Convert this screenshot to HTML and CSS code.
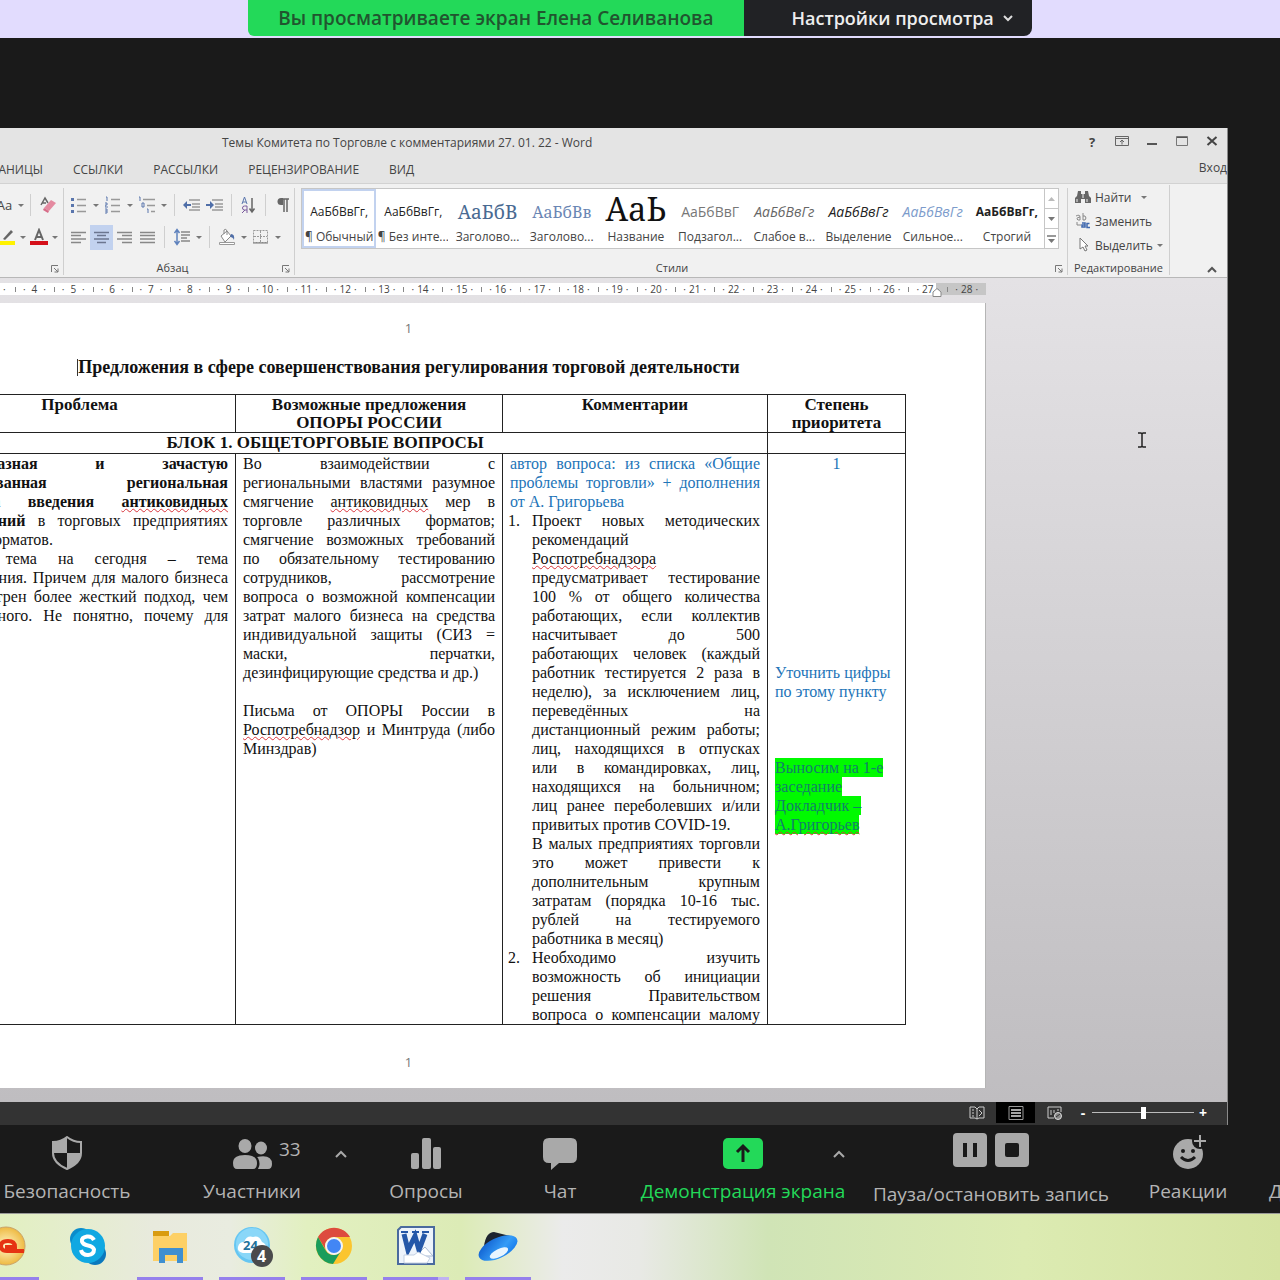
FILE: index.html
```html
<!DOCTYPE html>
<html lang="ru">
<head>
    <meta charset="UTF-8">
    <meta name="viewport" content="width=device-width, initial-scale=1.0">
    <title>Темы Комитета по Торговле - Word</title>
    <link rel="stylesheet" href="styles.css">
</head>
<body>
    <header class="share-strip">
        <div class="share-status">Вы просматриваете экран Елена Селиванова</div>
        <button class="share-options">Настройки просмотра
            <svg width="12" height="8" viewBox="0 0 12 8"><path d="M2 2l4 4 4-4" fill="none" stroke="#ddd" stroke-width="2"/></svg>
        </button>
    </header>

    <main class="stage">
        <div class="word">
            <div class="titlebar">
                <div class="title">Темы Комитета по Торговле с комментариями 27. 01. 22 - Word</div>
                <div class="window-buttons">
                    <button aria-label="Справка">?</button>
                    <button aria-label="Параметры ленты"><svg width="14" height="12" viewBox="0 0 14 12"><path d="M.5 1.500h13v9H.5zM.5 3.500h13M7 9.500V5M5 7l2-2 2 2" fill="none" stroke="#666"/></svg></button>
                    <button aria-label="Свернуть"><svg width="12" height="12" viewBox="0 0 12 12"><path d="M1 9h10" stroke="#555" stroke-width="2"/></svg></button>
                    <button aria-label="Развернуть"><svg width="12" height="12" viewBox="0 0 12 12"><path d="M1 2h10" stroke="#555" stroke-width="2"/><path d="M.5 1.500h11v9H.5z" fill="none" stroke="#777"/></svg></button>
                    <button aria-label="Закрыть"><svg width="12" height="12" viewBox="0 0 12 12"><path d="M1.500 2l9 8M10.500 2l-9 8" stroke="#444" stroke-width="2"/></svg></button>
                </div>
            </div>

            <nav class="tabs">
                <a href="#" class="tab tab-cut">РАЗМЕТКА СТРАНИЦЫ</a>
                <a href="#" class="tab">ССЫЛКИ</a>
                <a href="#" class="tab">РАССЫЛКИ</a>
                <a href="#" class="tab">РЕЦЕНЗИРОВАНИЕ</a>
                <a href="#" class="tab">ВИД</a>
                <a href="#" class="signin">Вход</a>
            </nav>

            <div class="ribbon">
                <section class="group group-font">
                    <div class="tools">
                        <button class="tool">Аа</button><button class="drop" aria-label="Регистр"></button>
                        <i class="sep"></i>
                        <button class="tool" aria-label="Очистить формат"><svg width="18" height="18" viewBox="0 0 18 18"><path d="M2 9l4-7 3 5M3 7h4" fill="none" stroke="#666" stroke-width="1.500"/><path d="M5 12l7-8 5 3-7 8z" fill="#e48aa0"/><path d="M5 12l5 3-1 2-5-3z" fill="#d76c88"/></svg></button>
                    </div>
                    <div class="tools">
                        <button class="tool" aria-label="Цвет выделения"><svg width="18" height="18" viewBox="0 0 18 18"><path d="M5 11l8-9 2 2-8 8z" fill="#666"/><path d="M0 13h17v4H0z" fill="#fff200"/></svg></button><button class="drop" aria-label="Цвета выделения"></button>
                        <button class="tool" aria-label="Цвет текста"><svg width="18" height="18" viewBox="0 0 18 18"><path d="M5 12l4-10 4 10M6 9h6" fill="none" stroke="#666" stroke-width="2"/><path d="M0 13h18v4H0z" fill="#d5101a"/></svg></button><button class="drop" aria-label="Цвета текста"></button>
                    </div>
                    <svg class="launcher" width="8" height="8" viewBox="0 0 8 8"><path d="M.5 7V.5H7M3 3l4 4M7 3.500V7H3.500" fill="none" stroke="#777"/></svg>
                </section>

                <section class="group group-para">
                    <div class="tools">
                        <button class="tool" aria-label="Маркеры"><svg width="16" height="18" viewBox="0 0 16 18"><path d="M0 2h3v3H0zM0 8h3v3H0zM0 14h3v3H0z" fill="#5a76ad"/><path d="M6 3.500h9M6 9.500h9M6 15.500h9" stroke="#999" stroke-width="1.500"/></svg></button><button class="drop" aria-label="Виды маркеров"></button>
                        <button class="tool" aria-label="Нумерация"><svg width="16" height="18" viewBox="0 0 16 18"><path d="M1 1h1v4M0 7h2v2H0v2h3M0 13h2v4H0M0 15h2" fill="none" stroke="#5a76ad"/><path d="M6 3.500h9M6 9.500h9M6 15.500h9" stroke="#999" stroke-width="1.500"/></svg></button><button class="drop" aria-label="Виды нумерации"></button>
                        <button class="tool" aria-label="Многоуровневый список"><svg width="18" height="18" viewBox="0 0 18 18"><path d="M1 1h1v4M4 7h2v4H4zM9 13h1v4" fill="none" stroke="#5a76ad"/><path d="M5 3.500h12M9 9.500h8M13 15.500h4" stroke="#999" stroke-width="1.500"/></svg></button><button class="drop" aria-label="Виды списков"></button>
                        <i class="sep"></i>
                        <button class="tool" aria-label="Уменьшить отступ"><svg width="17" height="14" viewBox="0 0 17 14"><path d="M6 2h11M9 6h8M9 9h8M6 12h11" stroke="#999" stroke-width="1.500"/><path d="M0 7l4-4v3h4v2H4v3z" fill="#4f6ea8"/></svg></button>
                        <button class="tool" aria-label="Увеличить отступ"><svg width="17" height="14" viewBox="0 0 17 14"><path d="M6 2h11M9 6h8M9 9h8M6 12h11" stroke="#999" stroke-width="1.500"/><path d="M8 7L4 3v3H0v2h4v3z" fill="#4f6ea8"/></svg></button>
                        <i class="sep"></i>
                        <button class="tool" aria-label="Сортировка"><svg width="15" height="18" viewBox="0 0 15 18"><path d="M1 8l2.500-7L6 8M2 6h3" fill="none" stroke="#5a76ad"/><path d="M6 17v-7H3.500a2 2 0 000 4H6M4 14l-3 3" fill="none" stroke="#7a5a9d"/><path d="M11 2v13M8.500 12.500L11 16l2.500-3.500" fill="none" stroke="#666" stroke-width="1.500"/></svg></button>
                        <i class="sep"></i>
                        <button class="tool" aria-label="Непечатаемые знаки"><svg width="12" height="14" viewBox="0 0 12 14"><path d="M5 1h7M7 1v13M10 1v13" stroke="#666" stroke-width="1.500"/><path d="M6 0H4a3.500 3.500 0 000 7h2z" fill="#666"/></svg></button>
                    </div>
                    <div class="tools">
                        <button class="tool" aria-label="По левому краю"><svg width="15" height="13" viewBox="0 0 15 13"><path d="M0 1.500h15M0 4.500h10M0 8h15M0 11.500h10" stroke="#888" stroke-width="1.500"/></svg></button>
                        <button class="tool tool-on" aria-label="По центру"><svg width="15" height="13" viewBox="0 0 15 13"><path d="M0 1.500h15M3 4.500h9M0 8h15M3 11.500h9" stroke="#6b7690" stroke-width="1.500"/></svg></button>
                        <button class="tool" aria-label="По правому краю"><svg width="15" height="13" viewBox="0 0 15 13"><path d="M0 1.500h15M5 4.500h10M0 8h15M5 11.500h10" stroke="#888" stroke-width="1.500"/></svg></button>
                        <button class="tool" aria-label="По ширине"><svg width="15" height="13" viewBox="0 0 15 13"><path d="M0 1.500h15M0 4.500h15M0 8h15M0 11.500h15" stroke="#888" stroke-width="1.500"/></svg></button>
                        <i class="sep"></i>
                        <button class="tool" aria-label="Интервал"><svg width="16" height="18" viewBox="0 0 16 18"><path d="M3 2v14M.5 5L3 1.500 5.500 5M.5 13L3 16.500 5.500 13" fill="none" stroke="#5f82bd" stroke-width="1.500"/><path d="M7 4h9M7 7h9M7 10h6M7 13h9" stroke="#888" stroke-width="1.500"/></svg></button><button class="drop" aria-label="Виды интервалов"></button>
                        <i class="sep"></i>
                        <button class="tool" aria-label="Заливка"><svg width="18" height="18" viewBox="0 0 18 18"><path d="M3 8l6-5 4 5-6 6zM6 6V2q2-2 3 1v4" fill="#fff" stroke="#888"/><path d="M13 6q4 0 3 6-1-3-4-3z" fill="#4f6ea8"/><path d="M1.500 14.500h15v2h-15z" fill="#fff" stroke="#999"/></svg></button><button class="drop" aria-label="Цвета заливки"></button>
                        <button class="tool" aria-label="Границы"><svg width="15" height="14" viewBox="0 0 15 14"><path d="M.5 .5h14v12H.5zM7.500 1v12M1 6.500h13" fill="none" stroke="#999" stroke-dasharray="2 1"/><path d="M0 13h15" stroke="#777"/></svg></button><button class="drop" aria-label="Виды границ"></button>
                    </div>
                    <div class="group-name">Абзац</div>
                    <svg class="launcher" width="8" height="8" viewBox="0 0 8 8"><path d="M.5 7V.5H7M3 3l4 4M7 3.500V7H3.500" fill="none" stroke="#777"/></svg>
                </section>

                <section class="group group-styles">
                    <div class="gallery">
                        <button class="style style-on"><span class="sample">АаБбВвГг,</span><span>¶ Обычный</span></button>
                        <button class="style"><span class="sample">АаБбВвГг,</span><span>¶ Без инте...</span></button>
                        <button class="style"><span class="sample sample-h1">АаБбВ</span><span>Заголово...</span></button>
                        <button class="style"><span class="sample sample-h2">АаБбВв</span><span>Заголово...</span></button>
                        <button class="style"><span class="sample sample-title">АаЬ</span><span>Название</span></button>
                        <button class="style"><span class="sample sample-sub">АаБбВвГ</span><span>Подзагол...</span></button>
                        <button class="style"><span class="sample sample-weak">АаБбВвГг</span><span>Слабое в...</span></button>
                        <button class="style"><span class="sample sample-em">АаБбВвГг</span><span>Выделение</span></button>
                        <button class="style"><span class="sample sample-strong-em">АаБбВвГг</span><span>Сильное...</span></button>
                        <button class="style"><span class="sample sample-bold">АаБбВвГг,</span><span>Строгий</span></button>
                        <div class="gallery-scroll">
                            <button aria-label="Вверх"><svg width="7" height="4" viewBox="0 0 7 4"><path d="M0 4l3.500-4L7 4z" fill="#bbb"/></svg></button>
                            <button aria-label="Вниз"><svg width="7" height="4" viewBox="0 0 7 4"><path d="M0 0l3.500 4L7 0z" fill="#777"/></svg></button>
                            <button aria-label="Все стили"><svg width="9" height="8" viewBox="0 0 9 8"><path d="M0 1h9" stroke="#777" stroke-width="1.500"/><path d="M1 4l3.500 4L8 4z" fill="#777"/></svg></button>
                        </div>
                    </div>
                    <div class="group-name">Стили</div>
                    <svg class="launcher" width="8" height="8" viewBox="0 0 8 8"><path d="M.5 7V.5H7M3 3l4 4M7 3.500V7H3.500" fill="none" stroke="#777"/></svg>
                </section>

                <section class="group group-edit">
                    <button class="edit"><svg width="16" height="14" viewBox="0 0 16 14"><path d="M3 1h3v3h4V1h3l1 5 2 2v5h-6V9H6v4H0V8l2-2z" fill="#666"/><path d="M2 9v3M12 9v3M8 1v7" stroke="#f1f1f1"/></svg>Найти<i class="drop drop-far"></i></button>
                    <button class="edit"><svg width="16" height="16" viewBox="0 0 16 16"><path d="M1 3q4-2 4 1v3H3q-3-2 2-3M8 0v7h2q2-2 0-4H8" fill="none" stroke="#888"/><path d="M2 9v3h4" fill="none" stroke="#888"/><path d="M7 10h3v4H7v-2h3M14.500 10.500h-2.500v4h3" fill="none" stroke="#3f68ae" stroke-width="1.500"/></svg>Заменить</button>
                    <button class="edit"><svg width="16" height="16" viewBox="0 0 16 16"><path d="M5 1v11l3-2 2 4 2-1-2-4h3z" fill="#fff" stroke="#777"/></svg>Выделить<i class="drop"></i></button>
                    <div class="group-name">Редактирование</div>
                </section>
                <button class="collapse" aria-label="Свернуть ленту"><svg width="10" height="7" viewBox="0 0 10 7"><path d="M1 6l4-4 4 4" fill="none" stroke="#555" stroke-width="2"/></svg></button>
            </div>

            <div class="workspace">
                <div class="ruler">
                    <span>4</span><span>5</span><span>6</span><span>7</span><span>8</span><span>9</span><span>10</span><span>11</span><span>12</span><span>13</span><span>14</span><span>15</span><span>16</span><span>17</span><span>18</span><span>19</span><span>20</span><span>21</span><span>22</span><span>23</span><span>24</span><span>25</span><span>26</span><span>27</span><span>28</span>
                    <svg class="indent-mark" width="10" height="9" viewBox="0 0 10 9"><path d="M1 8.500V4l4-3.500L9 4v4.500z" fill="#fff" stroke="#888"/></svg>
                </div>

                <article class="page">
                    <div class="page-number">1</div>
                    <h1>Предложения в сфере совершенствования регулирования торговой деятельности</h1>
                    <table>
                        <colgroup>
                            <col class="col-num"><col class="col-problem"><col class="col-offer"><col class="col-comment"><col class="col-rank">
                        </colgroup>
                        <thead>
                            <tr>
                                <th></th>
                                <th>Проблема</th>
                                <th>Возможные предложения<br>ОПОРЫ РОССИИ</th>
                                <th>Комментарии</th>
                                <th>Степень<br>приоритета</th>
                            </tr>
                        </thead>
                        <tbody>
                            <tr class="block-row">
                                <td colspan="4">БЛОК 1. ОБЩЕТОРГОВЫЕ ВОПРОСЫ</td>
                                <td></td>
                            </tr>
                            <tr>
                                <td></td>
                                <td>
                                    <p>
                                        <b>Разнообразная и зачастую<br>
                                        необоснованная региональная<br>
                                        практика введения <u class="typo">антиковидных</u><br>
                                        ограничений</b> в торговых предприятиях
                                        <span class="tail">разных форматов.</span>
                                    </p>
                                    <p>
                                        Главная тема на сегодня – тема<br>
                                        тестирования. Причем для малого бизнеса<br>
                                        предусмотрен более жесткий подход, чем<br>
                                        для крупного. Не понятно, почему для
                                    </p>
                                </td>
                                <td>
                                    <p>
                                        Во взаимодействии с<br>
                                        региональными властями разумное<br>
                                        смягчение <u class="typo">антиковидных</u> мер в<br>
                                        торговле различных форматов;<br>
                                        смягчение возможных требований<br>
                                        по обязательному тестированию<br>
                                        сотрудников, рассмотрение<br>
                                        вопроса о возможной компенсации<br>
                                        затрат малого бизнеса на средства<br>
                                        индивидуальной защиты (СИЗ =<br>
                                        маски, перчатки,
                                        <span class="tail">дезинфицирующие средства и др.)</span>
                                    </p>
                                    <p class="after-line">
                                        Письма от ОПОРЫ России в<br>
                                        <u class="typo">Роспотребнадзор</u> и Минтруда (либо
                                        <span class="tail">Минздрав)</span>
                                    </p>
                                </td>
                                <td>
                                    <p class="blue">
                                        автор вопроса: из списка «Общие<br>
                                        проблемы торговли» + дополнения
                                        <span class="tail">от А. Григорьева</span>
                                    </p>
                                    <ol>
                                        <li>
                                            <p>
                                                Проект новых методических
                                                <span class="tail">рекомендаций</span>
                                                <span class="tail"><u class="typo">Роспотребнадзора</u></span>
                                                предусматривает тестирование<br>
                                                100 % от общего количества<br>
                                                работающих, если коллектив<br>
                                                насчитывает до 500<br>
                                                работающих человек (каждый<br>
                                                работник тестируется 2 раза в<br>
                                                неделю), за исключением лиц,<br>
                                                переведённых на<br>
                                                дистанционный режим работы;<br>
                                                лиц, находящихся в отпусках<br>
                                                или в командировках, лиц,<br>
                                                находящихся на больничном;<br>
                                                лиц ранее переболевших и/или
                                                <span class="tail">привитых против COVID-19.</span>
                                            </p>
                                            <p>
                                                В малых предприятиях торговли<br>
                                                это может привести к<br>
                                                дополнительным крупным<br>
                                                затратам (порядка 10-16 тыс.<br>
                                                рублей на тестируемого
                                                <span class="tail">работника в месяц)</span>
                                            </p>
                                        </li>
                                        <li>
                                            <p>
                                                Необходимо изучить<br>
                                                возможность об инициации<br>
                                                решения Правительством<br>
                                                вопроса о компенсации малому
                                            </p>
                                        </li>
                                    </ol>
                                </td>
                                <td class="rank">
                                    <p class="blue rank-value">1</p>
                                    <p class="blue rank-note">Уточнить цифры по этому пункту</p>
                                    <p class="blue rank-plan"><mark>Выносим на 1-е<br>заседание<br>Докладчик –<br><u class="typo">А.Григорьев</u></mark></p>
                                </td>
                            </tr>
                        </tbody>
                    </table>
                    <div class="page-number page-foot">1</div>
                </article>

                <svg class="ibeam" width="10" height="16" viewBox="0 0 10 16"><path d="M1 1h3l1 1 1-1h3M1 15h3l1-1 1 1h3M5 2v12" fill="none" stroke="#222" stroke-width="1.500"/></svg>
            </div>

            <footer class="statusbar">
                <button class="view" aria-label="Режим чтения"><svg width="16" height="14" viewBox="0 0 16 14"><path d="M1 1h5l2 2 2-2h5v11h-5l-2 1-2-1H1zM8 3v10M3 4h2M3 7h2M3 10h2M10 4l3 3-3 3" fill="none" stroke="#ccc"/></svg></button>
                <button class="view view-on" aria-label="Разметка страницы"><svg width="16" height="14" viewBox="0 0 16 14"><path d="M1 .5h14v13H1z" fill="none" stroke="#999"/><path d="M3 4h10M3 7h10M3 10h10" stroke="#ddd" stroke-width="1.500"/></svg></button>
                <button class="view" aria-label="Веб-документ"><svg width="16" height="14" viewBox="0 0 16 14"><path d="M7 12H1V1h13v5M4 4v5M7 4v3M11 3v2" fill="none" stroke="#ccc"/><circle cx="11" cy="10" r="3.500" fill="#888" stroke="#ddd"/><path d="M9 11l4-3" stroke="#333"/></svg></button>
                <span class="zoom-sign">-</span>
                <input class="zoom" type="range" min="0" max="100" value="50" aria-label="Масштаб">
                <span class="zoom-sign">+</span>
            </footer>
        </div>
    </main>

    <nav class="meeting">
        <div class="item">
            <button class="control"><svg width="32" height="34" viewBox="0 0 32 34"><path d="M16 1q6 5 14 5v11q0 10-14 16Q2 27 2 17V6q8 0 14-5z" fill="none" stroke="#a9a9a9" stroke-width="2"/><path d="M16 1v16H2V6q8 0 14-5zM16 17h14q0 10-14 16z" fill="#a9a9a9"/></svg>Безопасность</button>
        </div>
        <div class="item">
            <button class="control"><svg width="40" height="34" viewBox="0 0 40 34"><g fill="#a9a9a9"><ellipse cx="13" cy="10" rx="6.500" ry="7"/><ellipse cx="29" cy="12" rx="6" ry="6.500"/><path d="M1 27q0-8 12-8t12 8q0 6-4 6H5q-4 0-4-6z"/><path d="M26 22q-1-1-1-1 15-3 15 7 0 5-4 5H26q3-5 0-11z"/></g></svg>Участники</button>
            <span class="count">33</span>
            <button class="more more-people" aria-label="Меню участников"><svg width="14" height="9" viewBox="0 0 14 9"><path d="M2 7l5-5 5 5" fill="none" stroke="#a9a9a9" stroke-width="2"/></svg></button>
        </div>
        <div class="item">
            <button class="control"><svg width="32" height="34" viewBox="0 0 32 34"><g fill="#a9a9a9"><rect x="1" y="17" width="8" height="16" rx="2"/><rect x="12" y="2" width="9" height="31" rx="2"/><rect x="23" y="11" width="8" height="22" rx="2"/></g></svg>Опросы</button>
        </div>
        <div class="item">
            <button class="control"><svg width="36" height="34" viewBox="0 0 36 34"><path d="M7 2h22q6 0 6 6v13q0 6-6 6H17l-8 7v-7H7q-6 0-6-6V8q0-6 6-6z" fill="#a9a9a9"/></svg>Чат</button>
        </div>
        <div class="item">
            <button class="control control-share"><svg width="40" height="34" viewBox="0 0 40 34"><rect y="2" width="40" height="31" rx="5" fill="#23d959"/><path d="M20 26V11M14 16l6-6 6 6" fill="none" stroke="#1a1a1a" stroke-width="3"/></svg>Демонстрация экрана</button>
            <button class="more more-share" aria-label="Меню демонстрации"><svg width="14" height="9" viewBox="0 0 14 9"><path d="M2 7l5-5 5 5" fill="none" stroke="#a9a9a9" stroke-width="2"/></svg></button>
        </div>
        <div class="item">
            <button class="control control-record"><svg width="76" height="34" viewBox="0 0 76 34"><g fill="#a9a9a9"><rect width="34" height="34" rx="4"/><rect x="42" width="34" height="34" rx="4"/></g><path d="M12 10v14M22 10v14" stroke="#1a1a1a" stroke-width="4"/><rect x="52" y="10" width="14" height="14" rx="2" fill="#1a1a1a"/></svg>Пауза/остановить запись</button>
        </div>
        <div class="item">
            <button class="control"><svg width="38" height="36" viewBox="0 0 38 36"><ellipse cx="19" cy="20" rx="15" ry="15" fill="#a9a9a9"/><circle cx="31" cy="7" r="8" fill="#1a1a1a"/><path d="M31 1v12M25 7h12" stroke="#a9a9a9" stroke-width="2"/><circle cx="14" cy="17" r="2" fill="#1a1a1a"/><circle cx="24" cy="17" r="2" fill="#1a1a1a"/><path d="M12 23q7 7 14 0" fill="none" stroke="#1a1a1a" stroke-width="3"/></svg>Реакции</button>
        </div>
        <div class="item item-last">
            <button class="control">Другое</button>
        </div>
    </nav>

    <footer class="taskbar">
        <button class="app app-open" aria-label="Браузер"><svg width="40" height="40" viewBox="0 0 40 40"><defs><radialGradient id="gold"><stop offset="0" stop-color="#fff6c8"/><stop offset="1" stop-color="#eeba42"/></radialGradient></defs><ellipse cx="20" cy="20" rx="19" ry="19" fill="url(#gold)" stroke="#c9a36a"/><path d="M38 25H21q-6 0-6-5t7-5q7 0 7 6H19" fill="none" stroke="#e63312" stroke-width="4"/></svg></button>
        <button class="app" aria-label="Skype"><svg width="40" height="40" viewBox="0 0 40 40"><circle cx="13" cy="13" r="11" fill="#0a8ccb"/><circle cx="27" cy="28" r="11" fill="#0a78bd"/><circle cx="20" cy="20" r="17" fill="#10a8e2"/><path d="M26 14q-2-4-7-3.500-6 1-5 5 1 3 6 4t6 4q0 5-6 5.500-6 0-7-5" fill="none" stroke="#fff" stroke-width="4"/></svg></button>
        <button class="app app-open" aria-label="Проводник"><svg width="40" height="40" viewBox="0 0 40 40"><path d="M3 5h16v6H3z" fill="#d99c10"/><path d="M3 10h17l3-3h14v28H3z" fill="#fdd066"/><path d="M9 37V22h24v15h-6v-8H15v8z" fill="#3f8fd0"/></svg></button>
        <button class="app app-open" aria-label="Битрикс24"><svg width="44" height="44" viewBox="0 0 44 44"><circle cx="22" cy="21" r="18" fill="#66c6f2"/><circle cx="22" cy="20" r="16" fill="#8ad7f8"/><path d="M13 29q-6-1-5-6 1-5 6-5 3-7 9-5 6-2 9 5 5 2 4 7-1 4-5 4z" fill="#fff"/><text x="13" y="26" font-size="13" font-weight="bold" font-family="Noto Sans" fill="#22729c">24</text><circle cx="32" cy="32" r="11" fill="#4a4a4c"/><text x="27" y="38" font-size="16" font-weight="bold" font-family="Noto Sans" fill="#fff">4</text></svg></button>
        <button class="app app-open" aria-label="Chrome"><svg width="40" height="40" viewBox="0 0 40 40"><circle cx="20" cy="20" r="18" fill="#fbc52e"/><path d="M4 11a18.500 18.500 0 0132 0H20a9 9 0 00-8 13z" fill="#dd4b3e"/><path d="M4 11a18.500 18.500 0 0015 27l8-13a9 9 0 01-15 0z" fill="#1a9d5b"/><circle cx="20" cy="20" r="8" fill="#4286f5" stroke="#f4f4f4" stroke-width="2"/></svg></button>
        <button class="app app-open app-stacked" aria-label="Word"><svg width="40" height="40" viewBox="0 0 40 40"><path d="M5 1h33v37H2V4z" fill="#edf3fb" stroke="#4a6a9e" stroke-width="2"/><path d="M20 30h17l-8-9z" fill="#fff" stroke="#a9bad4"/><path d="M8 8l4 16 7-14 4 14 6-16" fill="none" stroke="#2457a8" stroke-width="5"/><path d="M5 6h7M16 6h7M26 6h7" stroke="#2457a8" stroke-width="2"/><path d="M8 29h10l4-3 12 6-3 5H8z" fill="#fff" stroke="#c3cfe2"/></svg></button>
        <button class="app app-open" aria-label="Яндекс Диск"><svg width="42" height="40" viewBox="0 0 42 40"><defs><linearGradient id="disk" x1="0" y1="0" x2="1" y2="1"><stop offset="0" stop-color="#0a55c9"/><stop offset=".6" stop-color="#349cf7"/><stop offset="1" stop-color="#0e6fe8"/></linearGradient></defs><path d="M7 20Q9 6 17 6l16 4-15 13z" fill="#1d2430"/><ellipse cx="21" cy="22" rx="21" ry="10" transform="rotate(-26 21 22)" fill="url(#disk)"/><ellipse cx="22" cy="27" rx="10" ry="4" transform="rotate(-26 22 27)" fill="#e8f5ff"/></svg></button>
    </footer>
</body>
</html>
```

FILE: styles.css
```css
* {
    box-sizing: border-box;
}

body {
    margin: 0;
    min-height: 100vh;
    display: flex;
    flex-direction: column;
    overflow: hidden;
    background-color: #1a1a1a;
    font-family: "Open Sans", "Noto Sans", sans-serif;
}

button {
    padding: 0;
    border: none;
    background: none;
    color: inherit;
    font: inherit;
    cursor: pointer;
}

a {
    color: inherit;
    text-decoration: none;
}

svg {
    flex: none;
}

/* Screen sharing strip */
.share-strip {
    display: flex;
    justify-content: center;
    height: 38px;
    padding-bottom: 2px;
    background-color: #e2dcfe;
    font-size: 18px;
    font-weight: 600;
}

.share-status {
    padding: 0 30px;
    border-radius: 0 0 0 6px;
    background-color: #23d959;
    color: #21552f;
    font-size: 19px;
    line-height: 36px;
}

.share-options {
    display: flex;
    align-items: center;
    gap: 8px;
    padding: 0 18px 0 48px;
    border-radius: 0 0 8px 0;
    background-color: #212225;
    color: #eee;
}

.stage {
    flex: 1;
    display: flex;
    padding: 90px 52px 0 0;
}

/* Word window */
.word {
    flex: 1;
    min-width: 0;
    display: flex;
    flex-direction: column;
    border-right: 1px solid #8a8a8a;
    background-color: #e4e4e4;
    color: #444;
    font-size: 12px;
}

.titlebar {
    display: flex;
    align-items: center;
    height: 28px;
}

.title {
    flex: 1;
    padding-left: 222px;
    white-space: nowrap;
}

.window-buttons {
    display: flex;
}

.window-buttons button {
    width: 30px;
    height: 24px;
    font-size: 13px;
    font-weight: bold;
}

.tabs {
    display: flex;
    gap: 30px;
    height: 27px;
    line-height: 27px;
}

.tab-cut {
    width: 43px;
    display: flex;
    justify-content: flex-end;
    white-space: nowrap;
}

.signin {
    margin-left: auto;
    line-height: 24px;
}

.ribbon {
    display: flex;
    height: 95px;
    border-top: 1px solid #d2d2d2;
    border-bottom: 1px solid #b8b8b8;
    background-color: #f1f1f1;
}

.group {
    position: relative;
    display: flex;
    flex-direction: column;
    margin: 4px 0 2px;
    border-right: 1px solid #cfcfcf;
}

.group-font {
    width: 64px;
    align-items: flex-end;
    padding: 1px 4px 0 0;
}

.group-para {
    width: 231px;
    padding: 1px 0 0 3px;
}

.group-styles {
    flex: 1;
    min-width: 0;
    padding: 0 8px 0 6px;
}

.group-edit {
    width: 102px;
    margin-top: 1px;
    padding-left: 7px;
}

.tools {
    display: flex;
    align-items: center;
    height: 32px;
}

.tool {
    display: flex;
    justify-content: center;
    align-items: center;
    width: 23px;
    height: 25px;
    font-size: 13px;
}

.tool-on {
    background-color: #c2d2ef;
}

.drop {
    width: 11px;
    height: 24px;
    display: flex;
    justify-content: center;
    align-items: center;
}

.drop::before {
    content: "";
    border: 3px solid transparent;
    border-top-color: #777;
    border-bottom: none;
}

.group-font .drop {
    width: 9px;
}

.drop-far {
    margin-left: 6px;
}

.sep {
    width: 1px;
    height: 22px;
    margin: 0 5px;
    background-color: #cfcfcf;
}

.group-name {
    margin-top: auto;
    padding-right: 16px;
    text-align: center;
    font-size: 11px;
    line-height: 14px;
}

.launcher {
    position: absolute;
    right: 4px;
    bottom: 2px;
}

.gallery {
    display: flex;
    height: 61px;
    border: 1px solid #c6c6c6;
    background-color: #fff;
}

.style {
    flex: 1;
    min-width: 0;
    display: flex;
    flex-direction: column;
    align-items: center;
    justify-content: flex-end;
    border: 2px solid transparent;
    font-size: 12px;
    line-height: 18px;
    white-space: nowrap;
    overflow: hidden;
}

.style-on {
    border-color: #c2d2ef;
}

.sample {
    line-height: 32px;
    color: #222;
}

.sample-h1,
.sample-h2,
.sample-title {
    font-family: "Noto Serif", "DejaVu Serif", serif;
}

.sample-h1 {
    font-size: 19px;
    color: #4a6a92;
}

.sample-h2 {
    font-size: 16px;
    color: #6a86b4;
}

.sample-title {
    font-size: 32px;
    line-height: 38px;
    color: #111;
}

.sample-sub {
    font-size: 14px;
    color: #777;
}

.sample-weak,
.sample-em,
.sample-strong-em {
    font-size: 14px;
    font-style: italic;
}

.sample-weak {
    color: #666;
}

.sample-strong-em {
    color: #7c9bcb;
}

.sample-bold {
    font-weight: bold;
}

.gallery-scroll {
    width: 14px;
    display: flex;
    flex-direction: column;
    border-left: 1px solid #c6c6c6;
}

.gallery-scroll button {
    flex: 1;
    display: flex;
    justify-content: center;
    align-items: center;
}

.gallery-scroll button + button {
    border-top: 1px solid #c6c6c6;
}

.edit {
    display: flex;
    align-items: center;
    gap: 4px;
    height: 24px;
}

.edit .drop {
    width: 6px;
}

.group-edit .group-name {
    margin-left: -7px;
    padding-right: 0;
}

.collapse {
    width: 57px;
    padding: 76px 0 0 26px;
    line-height: 10px;
}

/* Ruler and page */
.workspace {
    position: relative;
    flex: 1;
    padding-top: 5px;
    background: linear-gradient(#e4e2e5, #bfbdc0);
    overflow: hidden;
}

.ruler {
    position: relative;
    display: flex;
    width: 986px;
    height: 12px;
    background: linear-gradient(to right, #fff 936px, #c6c6c6 936px);
    font-size: 10px;
    line-height: 12px;
}

.ruler::before {
    content: "·";
    width: 12px;
    padding-left: 3px;
}

.ruler span {
    flex: 1;
    display: flex;
    justify-content: space-between;
    padding: 0 8px;
    background: linear-gradient(#888, #888) left center / 1px 5px no-repeat;
}

.ruler span::before,
.ruler span::after {
    content: "·";
}

.indent-mark {
    position: absolute;
    left: 932px;
    top: 5px;
}

.page {
    width: 1154px;
    margin: 8px 0 14px -168px;
    padding: 16px 80px 16px 50px;
    border-right: 1px solid #b5b5b5;
    background-color: #fff;
    color: #111;
    font-family: "Liberation Serif", serif;
    font-size: 16px;
    line-height: 19px;
}

.page-number {
    margin-right: -30px;
    text-align: center;
    color: #777;
    font-family: "Open Sans", sans-serif;
    font-size: 13px;
}

.page-foot {
    margin-top: 28px;
}

h1 {
    margin: 20px -30px 17px 0;
    font-size: 18px;
    line-height: 19px;
    text-align: center;
}

/* text cursor in front of the heading */
h1::before {
    content: "";
    display: inline-block;
    height: 17px;
    border-left: 1px solid #333;
    vertical-align: -3px;
}

table {
    width: 1024px;
    border-collapse: collapse;
    table-layout: fixed;
}

.col-num {
    width: 41px;
}

.col-problem {
    width: 312px;
}

.col-offer {
    width: 267px;
}

.col-comment {
    width: 265px;
}

th,
td {
    padding: 0 7px;
    border: 1px solid #222;
    vertical-align: top;
    text-align: left;
}

th {
    padding-top: 1px;
    font-size: 17px;
    line-height: 18px;
    text-align: center;
}

.block-row td {
    height: 21px;
    text-align: center;
    font-size: 17px;
    font-weight: bold;
}

p {
    margin: 0;
    text-align: justify;
    text-align-last: justify;
}

/* last line of a justified paragraph */
.tail {
    display: block;
    text-align-last: left;
}

.after-line {
    margin-top: 19px;
}

ol {
    margin: 0;
    padding-left: 22px;
    list-style: none;
    counter-reset: point;
}

li {
    position: relative;
    counter-increment: point;
}

li::before {
    content: counter(point) ".";
    position: absolute;
    left: -24px;
}

.typo {
    text-decoration: underline wavy #d8333a 1px;
    text-underline-offset: 1px;
}

.blue {
    color: #2274b8;
}

.rank p {
    text-align: left;
    text-align-last: left;
}

.rank .rank-value {
    text-align-last: center;
}

.rank-note {
    margin-top: 190px;
}

.rank-plan {
    margin-top: 57px;
}

mark {
    padding: 1px 0;
    background-color: #00fa00;
    color: #12806a;
}

.ibeam {
    position: absolute;
    left: 1137px;
    top: 154px;
}

/* Status bar */
.statusbar {
    display: flex;
    justify-content: flex-end;
    align-items: center;
    height: 23px;
    padding: 0 18px 2px 0;
    background-color: #333;
    color: #fff;
    font-size: 14px;
    font-weight: bold;
}

.view {
    display: flex;
    justify-content: center;
    align-items: center;
    width: 39px;
    height: 21px;
}

.view-on {
    background-color: #000;
}

.zoom-sign {
    width: 12px;
    text-align: center;
}

.zoom-sign:first-of-type {
    margin-left: 3px;
}

.zoom {
    appearance: none;
    width: 102px;
    height: 12px;
    margin: 0 3px;
    background: linear-gradient(#bbb, #bbb) center / 100% 1px no-repeat;
}

.zoom::-webkit-slider-thumb {
    appearance: none;
    width: 5px;
    height: 12px;
    background-color: #fff;
}

/* Meeting controls */
.meeting {
    display: grid;
    grid-template-columns: 134fr 236fr 112fr 156fr 210fr 286fr 108fr 38fr;
    height: 88px;
    background-color: #1a1a1a;
    color: #b4b4b4;
    font-size: 19px;
}

.item {
    position: relative;
    display: flex;
    justify-content: center;
    min-width: 0;
}

.control {
    display: flex;
    flex-direction: column;
    align-items: center;
    justify-content: flex-end;
    gap: 8px;
    height: 79px;
    line-height: 26px;
    white-space: nowrap;
}

.control-share {
    color: #23d959;
}

.control-record {
    height: 82px;
    gap: 14px;
}

.count {
    position: absolute;
    left: 145px;
    top: 11px;
}

.more {
    position: absolute;
    top: 14px;
}

.more-people {
    right: 22px;
}

.more-share {
    right: 2px;
}

.item-last {
    justify-content: flex-start;
    padding-left: 27px;
}

/* Taskbar */
.taskbar {
    display: flex;
    height: 67px;
    padding-left: 6px;
    border-top: 1px solid #999;
    background: linear-gradient(to right, #e2f0c0 0, #e8eadd 12%, #e9ece0 18%, #e2f0c0 24%, #dcebb6 36%, #ebebeb 44%, #e8e9e5 50%, #d0e4b6 60%, #dcebb2 80%, #d5e3a2 100%);
}

.app {
    flex: none;
    display: flex;
    justify-content: center;
    align-items: center;
    width: 66px;
    margin-right: 16px;
    border-bottom: 3px solid transparent;
}

.app:first-child {
    margin-left: -33px;
}

.app-open {
    border-bottom-color: #9580ec;
}

.app-stacked {
    border-image: linear-gradient(to right, #9580ec 80%, #c0b2f2 80%) 3;
    border-width: 0 0 3px;
    border-style: solid;
}
```
